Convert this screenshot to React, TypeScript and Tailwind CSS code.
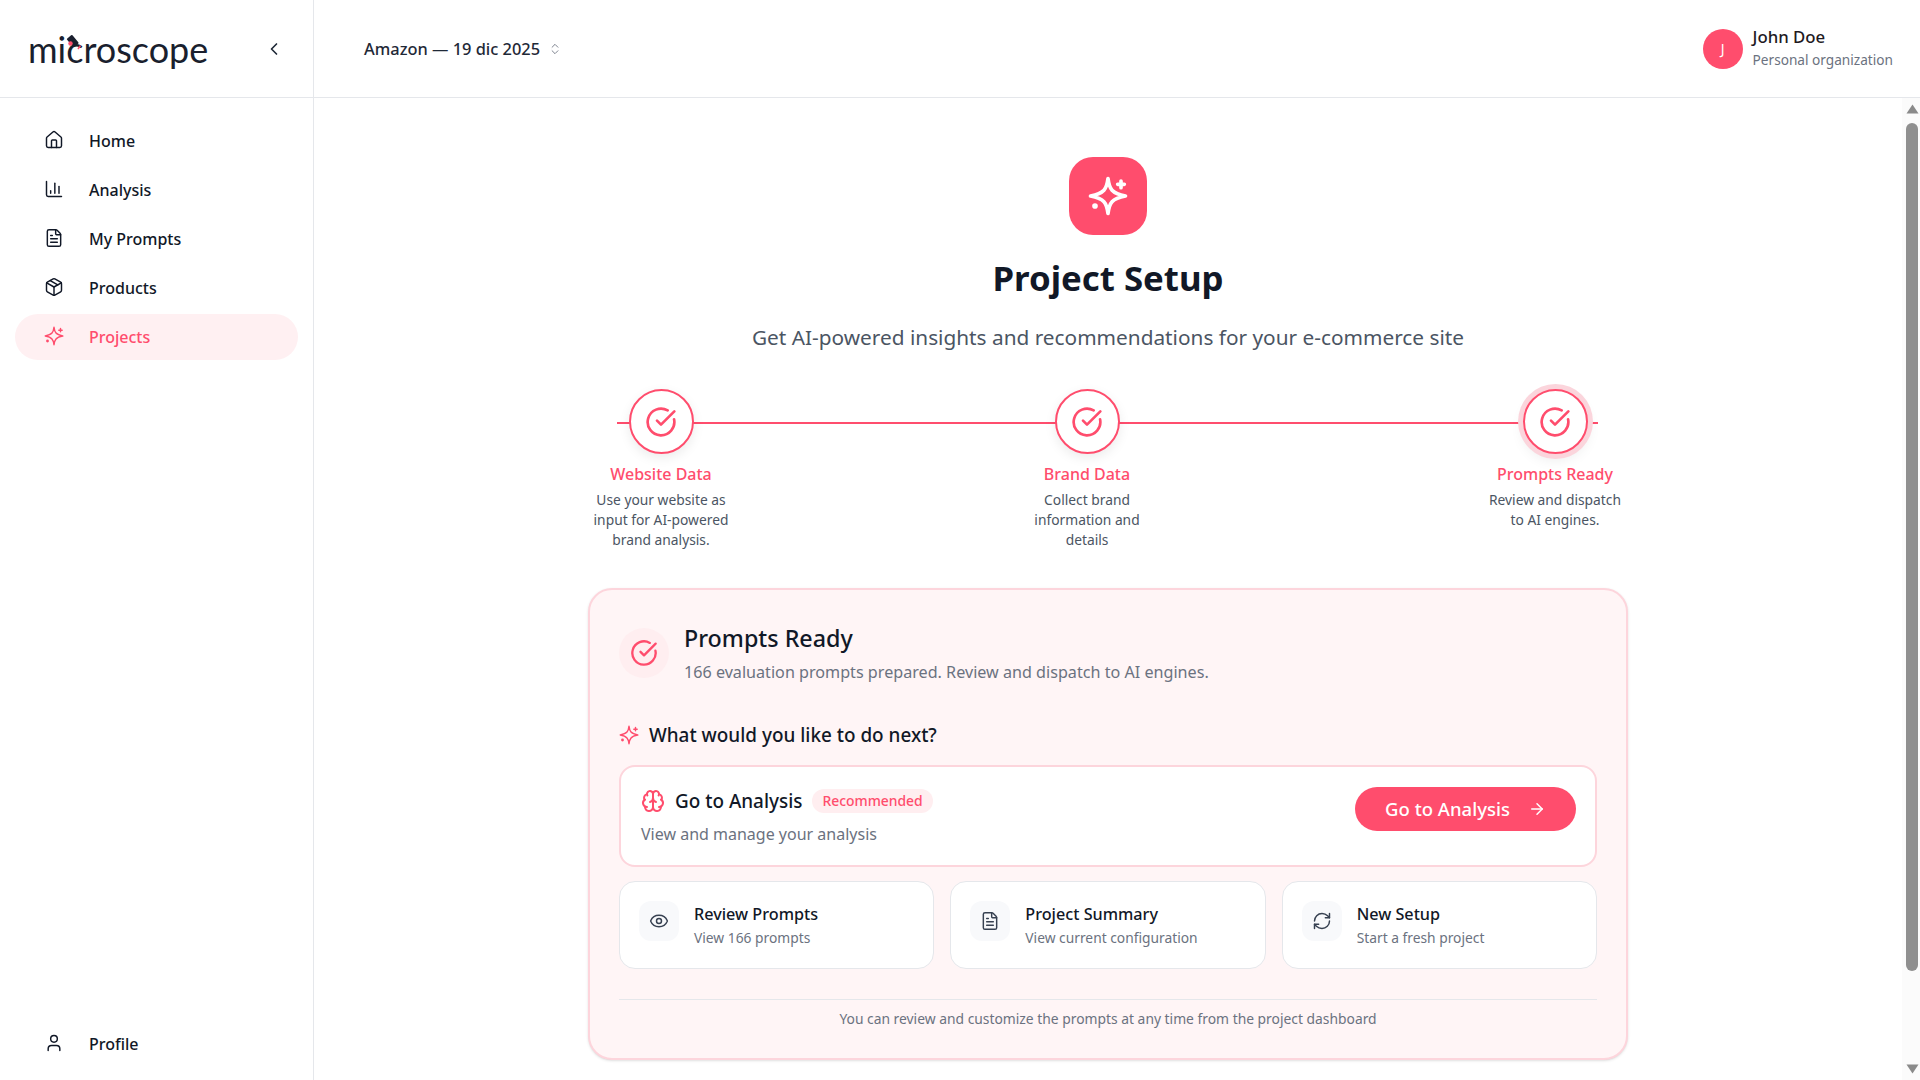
import {
  ArrowRight,
  Brain,
  ChartColumn,
  ChevronLeft,
  ChevronsUpDown,
  CircleCheckBig,
  Eye,
  FileText,
  House,
  Package,
  RefreshCw,
  User,
} from "lucide-react";
import type { ComponentType } from "react";

type IconType = ComponentType<{ size?: number; strokeWidth?: number; className?: string }>;

// lucide's Sparkles has a fatter star and a bigger dot than the reference, so it is drawn here
function SparkleIcon({ size = 20, strokeWidth = 1.75, className }: { size?: number; strokeWidth?: number; className?: string }) {
  return (
    <svg
      width={size}
      height={size}
      viewBox="0 0 24 24"
      fill="none"
      stroke="currentColor"
      strokeWidth={strokeWidth}
      strokeLinecap="round"
      strokeLinejoin="round"
      className={className}
    >
      <path d="M12 1.5C12.8 7.8 14.2 10.4 22.5 12C14.2 13.6 12.8 16.2 12 22.5C11.2 16.2 9.8 13.6 1.5 12C9.8 10.4 11.2 7.8 12 1.5Z" />
      <path d="M19.8 3v4M21.8 5h-4" />
      <circle cx="4.2" cy="18" r="1.7" fill="currentColor" stroke="none" />
    </svg>
  );
}

const navItems: { label: string; icon: IconType; active?: boolean }[] = [
  { label: "Home", icon: House },
  { label: "Analysis", icon: ChartColumn },
  { label: "My Prompts", icon: FileText },
  { label: "Products", icon: Package },
  { label: "Projects", icon: SparkleIcon, active: true },
];

const steps = [
  { title: "Website Data", lines: ["Use your website as", "input for AI-powered", "brand analysis."], className: "" },
  { title: "Brand Data", lines: ["Collect brand", "information and", "details"], className: "ml-[280px]" },
  { title: "Prompts Ready", lines: ["Review and dispatch", "to AI engines."], className: "ml-[322px]", current: true },
];

const actions = [
  { title: "Review Prompts", detail: "View 166 prompts", icon: Eye },
  { title: "Project Summary", detail: "View current configuration", icon: FileText },
  { title: "New Setup", detail: "Start a fresh project", icon: RefreshCw },
];

function Logo() {
  return (
    <div className="relative ml-[28px] flex h-[40px] items-center">
      <span className="font-['Lato',sans-serif] text-[36px] leading-none font-normal text-[#1a1f2e]">microscope</span>
      {/* little microscope sitting on the c */}
      <svg className="absolute top-[5px] left-[37px]" width="20" height="18" viewBox="0 0 20 18">
        <rect x="4" y="2" width="7" height="11" rx="1" transform="rotate(-40 7 7)" fill="#1a1f2e" />
        <circle cx="5.5" cy="9.5" r="2.2" fill="#ff4d6d" />
        <path d="M13 15l2.5-3.5" stroke="#ff4d6d" strokeWidth="1.5" />
      </svg>
    </div>
  );
}

function NavLink({ label, icon: Icon, active }: { label: string; icon: IconType; active?: boolean }) {
  return (
    <div
      className={`mx-[15px] flex h-[46px] items-center rounded-full pl-[29px] ${active ? "bg-[#fff0f2] text-[#ff4d6d]" : "text-[#111827]"}`}
    >
      <Icon size={20} strokeWidth={1.75} className="mb-[2px]" />
      <span className="ml-[25px] text-[16px] font-medium">{label}</span>
    </div>
  );
}

function Sidebar() {
  return (
    <aside className="flex h-full w-[314px] shrink-0 flex-col border-r border-[#e5e7eb]">
      <div className="flex h-[98px] shrink-0 items-center justify-between border-b border-[#e5e7eb] pr-[29px]">
        <Logo />
        <ChevronLeft size={20} strokeWidth={2} className="text-[#1f2937]" />
      </div>
      <nav className="flex flex-col gap-[3px] pt-[20px]">
        {navItems.map((item) => (
          <NavLink key={item.label} {...item} />
        ))}
      </nav>
      <div className="mt-auto pb-[13px]">
        <NavLink label="Profile" icon={User} />
      </div>
    </aside>
  );
}

function TopBar() {
  return (
    <header className="flex h-[98px] shrink-0 items-center justify-between border-b border-[#e5e7eb] pr-[27px] pl-[50px]">
      <div className="flex items-center gap-[8px] pt-[1px]">
        <span className="text-[16.4px] font-medium text-[#1f2937]">Amazon — 19 dic 2025</span>
        <ChevronsUpDown size={14} strokeWidth={1.5} className="text-[#6b7280]" />
      </div>
      <div className="flex items-center gap-[10px]">
        <div className="flex h-[40px] w-[40px] items-center justify-center rounded-full bg-[#ff4d6d] text-[14px] text-white">
          J
        </div>
        <div className="flex flex-col">
          <span className="text-[16.8px] leading-[22px] font-medium text-[#1f1a1f]">John Doe</span>
          <span className="text-[13.65px] leading-[23px] text-[#6b7280]">Personal organization</span>
        </div>
      </div>
    </header>
  );
}

function Stepper() {
  return (
    <div className="relative mt-[37px] flex w-[1040px] items-start">
      <div className="absolute top-[33px] left-[29px] h-[2px] w-[981px] bg-[#ff4d6d]" />
      {steps.map((step) => (
        <div key={step.title} className={`relative flex w-[146px] flex-col items-center ${step.className}`}>
          <div
            className={`flex h-[65px] w-[65px] items-center justify-center rounded-full border-[2.5px] border-[#ff4d6d] bg-white ${step.current ? "shadow-[0_0_0_5px_#fbd5dc,0_6px_14px_rgba(0,0,0,0.08)]" : "shadow-[0_4px_12px_rgba(0,0,0,0.08)]"}`}
          >
            <CircleCheckBig size={32} strokeWidth={2} className="text-[#ff4d6d]" />
          </div>
          <div className="mt-[8px] text-[16px] leading-[24px] font-medium text-[#ff4d6d]">{step.title}</div>
          <div className="mt-[4px] text-center text-[13.8px] leading-[20px] text-[#4b5563]">
            {step.lines.map((line) => (
              <div key={line} className="whitespace-nowrap">
                {line}
              </div>
            ))}
          </div>
        </div>
      ))}
    </div>
  );
}

function ActionCard({ title, detail, icon: Icon }: { title: string; detail: string; icon: IconType }) {
  return (
    <div className="flex h-[88px] flex-1 items-start gap-[15px] rounded-[16px] border border-[#e5e7eb] bg-white p-[19px]">
      <div className="flex h-[40px] w-[40px] shrink-0 items-center justify-center rounded-[12px] bg-[#f8f9fb] text-[#374151]">
        <Icon size={20} strokeWidth={1.75} />
      </div>
      <div className="mt-[1px] flex flex-col">
        <span className="text-[16.2px] leading-[24px] font-medium text-[#111827]">{title}</span>
        <span className="text-[13.8px] leading-[23px] text-[#6b7280]">{detail}</span>
      </div>
    </div>
  );
}

function ResultCard() {
  return (
    <section className="mt-[38px] h-[472px] w-[1040px] rounded-[24px] border-2 border-[#fdd5dc] bg-[#fff5f6] px-[29px] pt-[32px] shadow-sm">
      <div className="flex items-center gap-[15px]">
        <div className="flex h-[50px] w-[50px] items-center justify-center rounded-full bg-[#ffeef0]">
          <CircleCheckBig size={28} strokeWidth={2} className="text-[#ff4d6d]" />
        </div>
        <div className="flex flex-col">
          <h2 className="text-[23.3px] leading-[32px] font-medium text-[#111827]">Prompts Ready</h2>
          <p className="mt-[6px] text-[16.15px] leading-[24px] text-[#6b7280]">
            166 evaluation prompts prepared. Review and dispatch to AI engines.
          </p>
        </div>
      </div>

      <div className="mt-[37px] flex h-[28px] items-center gap-[10px]">
        <SparkleIcon size={20} strokeWidth={1.75} className="text-[#ff4d6d]" />
        <h3 className="text-[18.9px] font-medium text-[#111827]">What would you like to do next?</h3>
      </div>

      <div className="mt-[16px] flex h-[102px] items-center justify-between rounded-[16px] border-2 border-[#fdd5dc] bg-white pr-[19px] pl-[20px]">
        <div className="flex flex-col">
          <div className="flex items-center">
            <Brain size={24} strokeWidth={2} className="text-[#ff4d6d]" />
            <span className="ml-[10px] text-[18.9px] leading-[28px] font-medium text-[#111827]">Go to Analysis</span>
            <span className="ml-[10px] rounded-full bg-[#ffeef0] px-[10px] text-[13.9px] leading-[24px] font-medium text-[#ff4d6d]">
              Recommended
            </span>
          </div>
          <p className="mt-[7px] text-[16px] leading-[24px] text-[#6b7280]">View and manage your analysis</p>
        </div>
        <button className="mb-[15px] flex h-[44px] w-[221px] items-center justify-center gap-[18px] rounded-full bg-[#ff4d6d] text-[18.5px] font-medium text-white">
          Go to Analysis
          <ArrowRight size={18} strokeWidth={2} />
        </button>
      </div>

      <div className="mt-[14px] flex gap-[16px]">
        {actions.map((action) => (
          <ActionCard key={action.title} {...action} />
        ))}
      </div>

      <div className="mt-[30px] border-t border-[#e5e7eb] pt-[9px] text-center text-[13.85px] leading-[20px] text-[#6b7280]">
        You can review and customize the prompts at any time from the project dashboard
      </div>
    </section>
  );
}

function FakeScrollbar() {
  return (
    <div className="flex w-[18px] shrink-0 flex-col items-center bg-[#fbfbfb] pt-[6px] pb-[6px] pl-[2px]">
      <svg width="13" height="10" viewBox="0 0 13 10">
        <path d="M6.5 0.5L12.5 9.5H0.5Z" fill="#8a8a8a" strokeLinejoin="round" />
      </svg>
      <div className="mt-[9px] h-[848px] w-[12px] rounded-full bg-[#8f8f8f]" />
      <svg className="mt-auto" width="13" height="10" viewBox="0 0 13 10">
        <path d="M0.5 0.5H12.5L6.5 9.5Z" fill="#8a8a8a" strokeLinejoin="round" />
      </svg>
    </div>
  );
}

export default function App() {
  return (
    <div className="flex h-screen w-full overflow-hidden bg-white font-['Noto_Sans',sans-serif]">
      <Sidebar />
      <div className="flex h-full min-w-0 flex-1 flex-col">
        <TopBar />
        <div className="flex min-h-0 flex-1">
          <main className="flex min-w-0 flex-1 flex-col items-center overflow-hidden pt-[59px]">
            <div className="flex h-[78px] w-[78px] shrink-0 items-center justify-center rounded-[24px] bg-[#ff4d6d]">
              <SparkleIcon size={40} strokeWidth={2.2} className="text-white" />
            </div>
            <h1 className="mt-[23px] text-[34.8px] leading-[40px] font-bold text-[#111827]">Project Setup</h1>
            <p className="mt-[25px] mb-[1px] text-[20.8px] leading-[28px] text-[#4b5563]">
              Get AI-powered insights and recommendations for your e-commerce site
            </p>
            <Stepper />
            <ResultCard />
          </main>
          <FakeScrollbar />
        </div>
      </div>
    </div>
  );
}
